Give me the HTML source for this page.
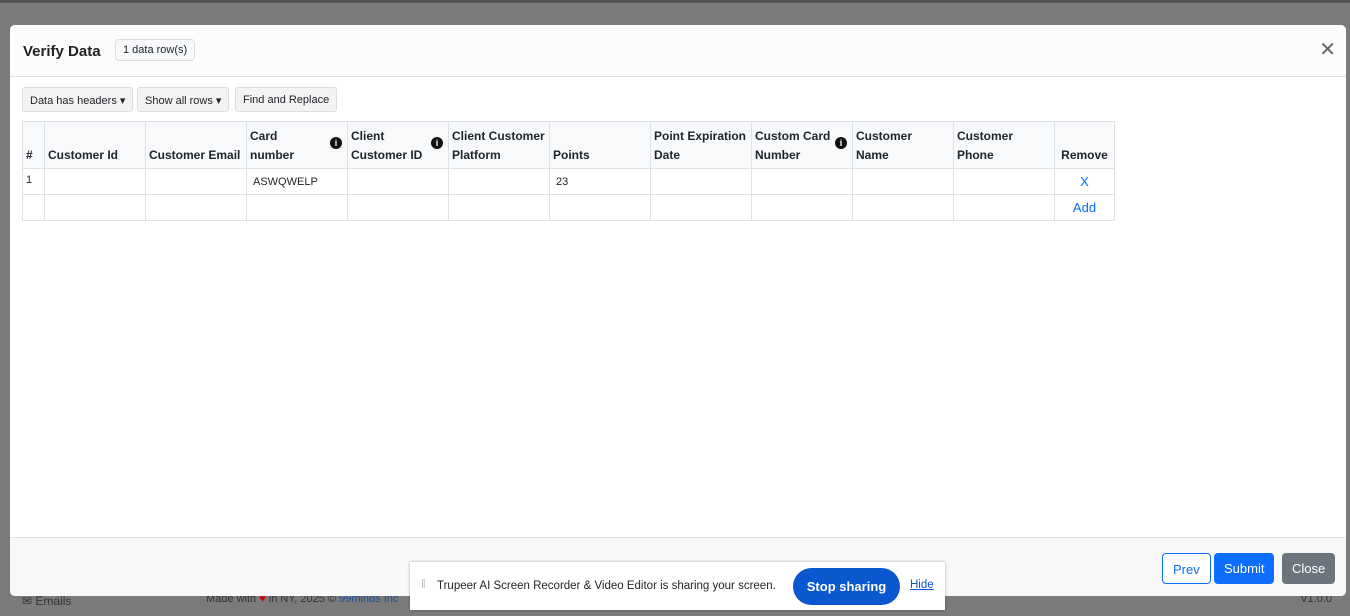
<!DOCTYPE html>
<html><head><style>
*{box-sizing:border-box;margin:0;padding:0}
body{width:1350px;height:616px;background:#7b7b7b;font-family:"Liberation Sans",sans-serif;position:relative;overflow:hidden;color:#212529}
.top{position:absolute;left:0;top:0;width:1350px;height:3px;background:#555}
.modal{position:absolute;left:10px;top:25px;width:1336px;height:571px;background:#fff;border-radius:5px;overflow:hidden}
.hdr{height:52px;border-bottom:1px solid #dee2e6;position:relative;background:#fcfcfc}
.hdr h1{position:absolute;left:13px;top:18px;font-size:15px;font-weight:bold;color:#222}
.badge{position:absolute;left:105px;top:14px;border:1px solid #ddd;border-radius:4px;font-size:11px;padding:4px 7px;background:#f8f9fa}
.x{position:absolute;right:10px;top:14px;font-size:20px;color:#666;line-height:22px;font-weight:300}
.btn{position:absolute;top:62px;height:25px;border:1px solid #ddd;border-radius:3px;background:#f3f3f3;font-size:11px;padding:6px 7px;white-space:nowrap}
table{position:absolute;left:12px;top:96px;border-collapse:collapse;font-size:12px}
td,th{border:1px solid #dee2e6;padding:0 3px;text-align:left;vertical-align:bottom}
th{height:47px;background:#f8f9fa;font-weight:bold;padding-bottom:3px;position:relative;line-height:19px}
td{height:26px;vertical-align:middle;font-size:11px}
.i{position:absolute;right:5px;top:15px;width:12px;height:12px;border-radius:50%;background:#111;color:#fff;font-size:9px;text-align:center;line-height:12px;font-weight:bold}
.ftr{position:absolute;left:0;top:512px;width:100%;height:59px;border-top:1px solid #dee2e6;background:#f8f8f8}
.fb{position:absolute;top:15px;height:31px;border-radius:4px;font-size:13px;padding:8px 10px;color:#fff}
.bar{position:absolute;left:410px;top:562px;width:535px;height:48px;background:#fff;box-shadow:0 0 3px rgba(0,0,0,.3);font-size:11.5px}
.bottom{position:absolute;left:0;top:596px;width:1350px;height:20px;font-size:11px;color:#333}
</style></head><body>
<div class="top"></div>
<div class="bottom"><span style="position:absolute;left:22px;top:-2px;font-size:12px">✉ Emails</span><span style="position:absolute;left:206px;top:-3px">Made with <span style="color:#c00">♥</span> in NY, 2025 © <span style="color:#1a4f9a">99minds Inc</span></span><span style="position:absolute;right:18px;top:-3px">V1.0.0</span></div>
<div class="modal">
 <div class="hdr"><h1>Verify Data</h1><span class="badge">1 data row(s)</span><span class="x">✕</span></div>
 <div class="btn" style="left:12px">Data has headers ▾</div>
 <div class="btn" style="left:127px">Show all rows ▾</div>
 <div class="btn" style="left:225px">Find and Replace</div>
 <table>
 <tr><th style="width:22px">#</th><th style="width:101px">Customer Id</th><th style="width:101px">Customer Email</th><th style="width:101px">Card<br>number<span class="i">i</span></th><th style="width:101px">Client<br>Customer ID<span class="i">i</span></th><th style="width:101px">Client Customer<br>Platform</th><th style="width:101px">Points</th><th style="width:101px">Point Expiration<br>Date</th><th style="width:101px">Custom Card<br>Number<span class="i">i</span></th><th style="width:101px">Customer<br>Name</th><th style="width:101px">Customer<br>Phone</th><th style="width:60px;text-align:center">Remove</th></tr>
 <tr><td style="vertical-align:top;padding-top:5px">1</td><td></td><td></td><td style="padding-left:6px">ASWQWELP</td><td></td><td></td><td style="padding-left:6px">23</td><td></td><td></td><td></td><td></td><td style="text-align:center;color:#0d6efd;font-size:13px">X</td></tr>
 <tr><td></td><td></td><td></td><td></td><td></td><td></td><td></td><td></td><td></td><td></td><td></td><td style="text-align:center;color:#0d6efd;font-size:13px">Add</td></tr>
 </table>
 <div class="ftr">
  <div class="fb" style="left:1152px;border:1px solid #0d6efd;color:#0d6efd;background:#fff">Prev</div>
  <div class="fb" style="left:1204px;background:#0d6efd">Submit</div>
  <div class="fb" style="left:1272px;background:#6c757d">Close</div>
 </div>
</div>
<div class="bar">
 <span style="position:absolute;left:11px;top:17px;color:#bbb">‖</span>
 <span style="position:absolute;left:27px;top:18px">Trupeer AI Screen Recorder &amp; Video Editor is sharing your screen.</span>
 <span style="position:absolute;left:383px;top:6px;width:107px;height:37px;border-radius:19px;background:#0b57d0;color:#fff;font-weight:bold;font-size:13px;text-align:center;line-height:37px">Stop sharing</span>
 <span style="position:absolute;left:500px;top:17px;color:#0b57d0;text-decoration:underline">Hide</span>
</div>
</body></html>
